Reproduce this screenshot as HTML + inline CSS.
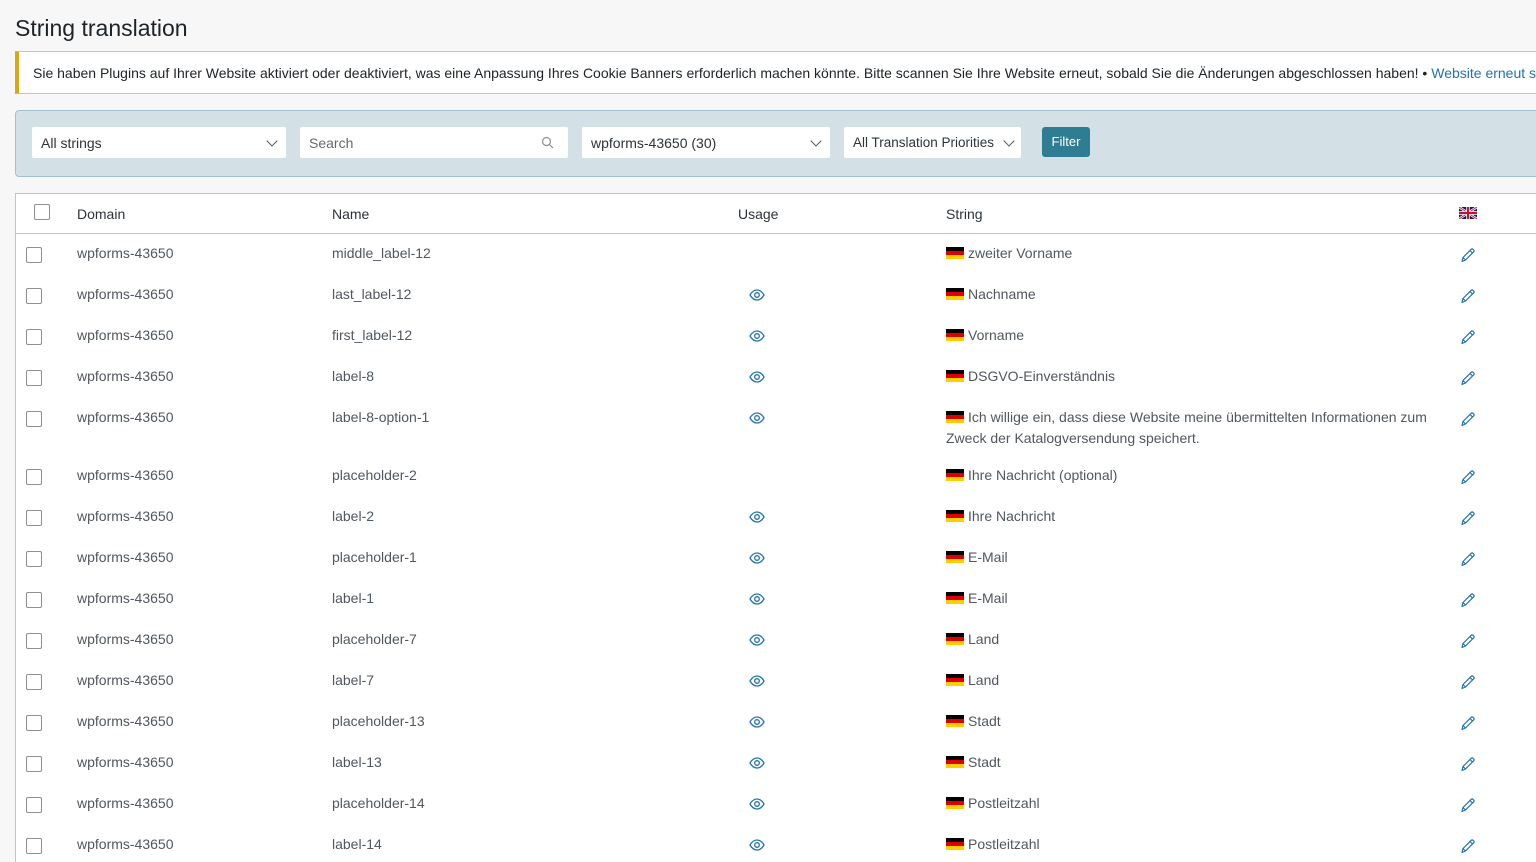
<!DOCTYPE html>
<html><head><meta charset="utf-8"><style>
*{box-sizing:border-box;margin:0;padding:0}
html,body{width:1536px;height:862px;overflow:hidden}
body{background:#f7f7f7;font-family:"Liberation Sans",sans-serif;font-size:13.5px;color:#3c434a;position:relative}
.a{position:absolute;white-space:nowrap}
h1{position:absolute;left:15px;top:15px;font-size:23px;font-weight:400;color:#1d2327}
.notice{position:absolute;left:15px;top:51px;width:1540px;height:43px;background:#fff;border:1px solid #c3c4c7;border-left:4px solid #dba617;padding:0 0 0 14px;line-height:42px;font-size:14px;color:#1d2327;white-space:nowrap;overflow:hidden}
.notice a{color:#2271b1;text-decoration:none}
.filt{position:absolute;left:15px;top:110px;width:1540px;height:67px;background:#d3e1e6;border:1px solid #9ec2ce;border-radius:4px}
.sel{position:absolute;top:127px;height:31px;background:#fff;border-radius:2px;line-height:32px;padding-left:9px;font-size:14px;color:#2c3338}
.chev{position:absolute;top:11px;width:8px;height:8px;border-right:1.5px solid #50575e;border-bottom:1.5px solid #50575e;transform:rotate(45deg)}
.btn{position:absolute;left:1042px;top:127px;width:48px;height:30px;background:#2e7d93;border-radius:3px;color:#fff;font-size:13px;text-align:center;line-height:30px}
.tbl{position:absolute;left:15px;top:193px;width:1540px;height:700px;background:#fff;border:1px solid #c3c4c7}
.hdr{position:absolute;left:15px;top:233px;width:1540px;height:1px;background:#c3c4c7}
.cb{position:absolute;width:16px;height:16px;border:1px solid #8c8f94;border-radius:2px;background:#fff}
.t{position:absolute;white-space:nowrap;line-height:20px;color:#50575e;font-size:14px}
.flag{display:inline-block;width:18px;height:12px;vertical-align:-1px;margin-right:4px;background:linear-gradient(#000 0 33%,#dd0000 33% 66%,#ffce00 66%)}
</style></head><body>
<h1>String translation</h1>
<div class="notice">Sie haben Plugins auf Ihrer Website aktiviert oder deaktiviert, was eine Anpassung Ihres Cookie Banners erforderlich machen könnte. Bitte scannen Sie Ihre Website erneut, sobald Sie die Änderungen abgeschlossen haben! • <a>Website erneut scannen</a></div>
<div class="filt"></div>
<div class="sel" style="left:32px;width:254px">All strings<span class="chev" style="left:236px;top:10px"></span></div>
<div class="sel" style="left:300px;width:268px;color:#646970">Search
<svg style="position:absolute;left:241px;top:9px" width="13" height="13" viewBox="0 0 13 13"><circle cx="5.5" cy="5.5" r="4" fill="none" stroke="#8c8f94" stroke-width="1.2"/><path d="M8.5 8.5L12 12" stroke="#8c8f94" stroke-width="1.2"/></svg></div>
<div class="sel" style="left:582px;width:248px">wpforms-43650 (30)<span class="chev" style="left:230px;top:10px"></span></div>
<div class="sel" style="left:844px;width:177px;font-size:13.5px">All Translation Priorities<span class="chev" style="left:161px;top:10px"></span></div>
<div class="btn">Filter</div>
<div class="tbl"></div>
<div class="hdr"></div>
<div class="cb" style="left:34px;top:204px"></div>
<div class="t" style="left:77px;top:204px;color:#2c3338">Domain</div>
<div class="t" style="left:332px;top:204px;color:#2c3338">Name</div>
<div class="t" style="left:738px;top:204px;color:#2c3338">Usage</div>
<div class="t" style="left:946px;top:204px;color:#2c3338">String</div>
<svg style="position:absolute;left:1459px;top:207px" width="18" height="12" viewBox="0 0 60 40"><rect width="60" height="40" fill="#012169"/><path d="M0 0L60 40M60 0L0 40" stroke="#fff" stroke-width="8"/><path d="M0 0L60 40M60 0L0 40" stroke="#c8102e" stroke-width="3"/><path d="M30 0V40M0 20H60" stroke="#fff" stroke-width="12"/><path d="M30 0V40M0 20H60" stroke="#c8102e" stroke-width="7"/></svg>
<div id="rows"></div>
<script>
var d=[["middle_label-12","zweiter Vorname",0],["last_label-12","Nachname",1],["first_label-12","Vorname",1],["label-8","DSGVO-Einverständnis",1],["label-8-option-1","Ich willige ein, dass diese Website meine übermittelten Informationen zum<br>Zweck der Katalogversendung speichert.",1],["placeholder-2","Ihre Nachricht (optional)",0],["label-2","Ihre Nachricht",1],["placeholder-1","E-Mail",1],["label-1","E-Mail",1],["placeholder-7","Land",1],["label-7","Land",1],["placeholder-13","Stadt",1],["label-13","Stadt",1],["placeholder-14","Postleitzahl",1],["label-14","Postleitzahl",1]];
var ys=[253,294,335,376,417,475,516,557,598,639,680,721,762,803,844],h="";
var eye='<svg width="16" height="12" viewBox="0 0 16 12"><path d="M1 6C3 2.5 5.5 1 8 1s5 1.5 7 5c-2 3.5-4.5 5-7 5S3 9.5 1 6z" fill="none" stroke="#2271b1" stroke-width="1.3"/><circle cx="8" cy="6" r="2.3" fill="none" stroke="#2271b1" stroke-width="1.3"/></svg>';
var pen='<svg width="16" height="16" viewBox="0 0 16 16"><path d="M2 14.5l1-4L11.2 2.3a1.3 1.3 0 0 1 1.8 0l.7.7a1.3 1.3 0 0 1 0 1.8L5.5 13z M10 3.5l2.5 2.5 M3 10.5l2.5 2.5" fill="none" stroke="#2271b1" stroke-width="1.2" stroke-linejoin="round"/></svg>';
d.forEach(function(r,i){var y=ys[i];
h+='<div class="cb" style="left:26px;top:'+(y-6)+'px"></div>';
h+='<div class="t" style="left:77px;top:'+(y-10)+'px">wpforms-43650</div>';
h+='<div class="t" style="left:332px;top:'+(y-10)+'px">'+r[0]+'</div>';
if(r[2])h+='<div class="a" style="left:749px;top:'+(y-5)+'px">'+eye+'</div>';
h+='<div class="t" style="left:946px;top:'+(y-10)+'px;line-height:21px"><span class="flag"></span>'+r[1]+'</div>';
h+='<div class="a" style="left:1460px;top:'+(y-6)+'px">'+pen+'</div>';});
document.getElementById('rows').innerHTML=h;
</script>
</body></html>
